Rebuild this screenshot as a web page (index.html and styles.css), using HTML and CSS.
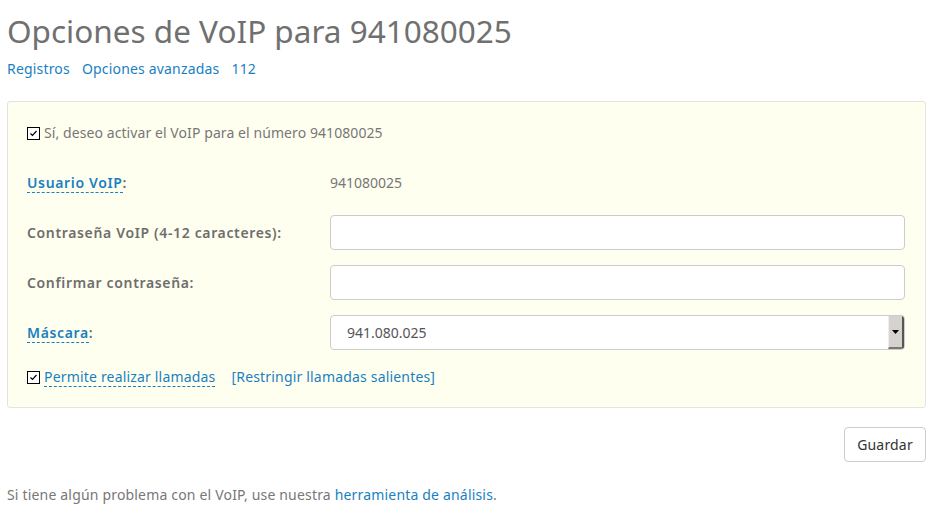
FILE: index.html
```html
<!DOCTYPE html>
<html lang="es">
<head>
<meta charset="utf-8">
<title>Opciones de VoIP</title>
<link rel="stylesheet" href="styles.css">
</head>
<body>
<h1 class="title">Opciones de VoIP para 941080025</h1>
<nav class="subnav">
  <a href="#">Registros</a>
  <a href="#">Opciones avanzadas</a>
  <a href="#">112</a>
</nav>
<form class="panel">
  <label class="check-row first">
    <span class="cbox"><svg width="9" height="9" viewBox="0 0 9 9"><path d="M1.5 4.5 L3.5 6.5 L7.5 2" fill="none" stroke="#000" stroke-width="1.2"/></svg></span>
    <span class="check-text">Sí, deseo activar el VoIP para el número 941080025</span>
  </label>
  <div class="row">
    <div class="label"><abbr class="help">Usuario VoIP</abbr>:</div>
    <div class="value">941080025</div>
  </div>
  <div class="row">
    <div class="label">Contraseña VoIP (4-12 caracteres):</div>
    <input class="field" type="text">
  </div>
  <div class="row">
    <div class="label">Confirmar contraseña:</div>
    <input class="field" type="text">
  </div>
  <div class="row">
    <div class="label"><abbr class="help">Máscara</abbr>:</div>
    <div class="select">
      <span class="select-value">941.080.025</span>
      <span class="select-btn"><svg width="7" height="4" viewBox="0 0 7 4"><path d="M0 0 H7 L3.5 4 Z" fill="#000"/></svg></span>
    </div>
  </div>
  <div class="check-row last">
    <span class="cbox"><svg width="9" height="9" viewBox="0 0 9 9"><path d="M1.5 4.5 L3.5 6.5 L7.5 2" fill="none" stroke="#000" stroke-width="1.2"/></svg></span>
    <abbr class="help link-help">Permite realizar llamadas</abbr>
    <a class="restrict" href="#">[Restringir llamadas salientes]</a>
  </div>
</form>
<div class="actions">
  <button class="btn" type="button">Guardar</button>
</div>
<p class="footer">Si tiene algún problema con el VoIP, use nuestra <a href="#">herramienta de análisis</a>.</p>
</body>
</html>
```
FILE: styles.css
```css
html, body {
  margin: 0;
  padding: 0;
  background: #fff;
}
body {
  padding: 8px 8px 8px 7px;
  font-family: "Noto Sans", "Open Sans", sans-serif;
  font-size: 14px;
  line-height: 20px;
  letter-spacing: 0.18px;
  color: #777;
}
a {
  color: #1a7fc1;
  text-decoration: none;
}
.title {
  margin: 0;
  font-size: 31.5px;
  font-weight: 400;
  line-height: 45px;
  letter-spacing: 0;
  color: #707070;
}
.subnav {
  margin-top: 6px;
  display: flex;
  gap: 12px;
}
.panel {
  margin-top: 22px;
  background: #fffff0;
  border: 1px solid #e3e3e3;
  border-radius: 3px;
  padding: 21px 20px 20px 19px;
  display: flex;
  flex-direction: column;
}
.check-row {
  display: flex;
  align-items: center;
  height: 20px;
}
.check-row.last {
  margin-top: 17px;
}
.cbox {
  width: 11px;
  height: 11px;
  border: 1px solid #000;
  background: #fff;
  display: inline-flex;
  align-items: center;
  justify-content: center;
  margin: 0 4px 0 0;
  flex: none;
}
.check-text {
  color: #777;
  letter-spacing: 0.08px;
}
.row {
  display: flex;
  align-items: center;
  height: 35px;
  margin-top: 15px;
}
.check-row.first + .row {
  margin-top: 22px;
}
.label {
  width: 303px;
  flex: none;
  font-weight: 600;
  color: #6e6e6e;
  letter-spacing: 0.65px;
}
.help {
  color: #1a7fc1;
  text-decoration: none;
  border-bottom: 1px dashed #1a7fc1;
}
.link-help {
  font-weight: 400;
  line-height: 18px;
}
.restrict {
  margin-left: 16px;
}
.value {
  color: #777;
  font-size: 14px;
  letter-spacing: 0;
}
.field {
  flex: 1;
  height: 35px;
  box-sizing: border-box;
  border: 1px solid #ccc;
  border-radius: 4px;
  background: #fff;
  margin: 0;
  font: inherit;
}
.select {
  flex: 1;
  height: 35px;
  box-sizing: border-box;
  border: 1px solid #ccc;
  border-radius: 4px;
  background: #fff;
  display: flex;
  align-items: stretch;
  overflow: hidden;
}
.select-value {
  flex: 1;
  padding-left: 16px;
  display: flex;
  align-items: center;
  color: #555;
  letter-spacing: 0;
}
.select-btn {
  width: 13px;
  background: #d6d3ce;
  border-left: 1px solid #eee;
  border-right: 2px solid #555;
  border-bottom: 2px solid #777;
  display: flex;
  align-items: center;
  justify-content: center;
}
.actions {
  display: flex;
  justify-content: flex-end;
  margin-top: 19px;
}
.btn {
  width: 82px;
  height: 35px;
  border: 1px solid #ccc;
  border-radius: 4px;
  background: #fff;
  font-family: "Noto Sans", "Open Sans", sans-serif;
  font-size: 14px;
  letter-spacing: 0.18px;
  color: #333;
  padding: 0;
}
.footer {
  margin: 23px 0 0;
  color: #777;
}
```
